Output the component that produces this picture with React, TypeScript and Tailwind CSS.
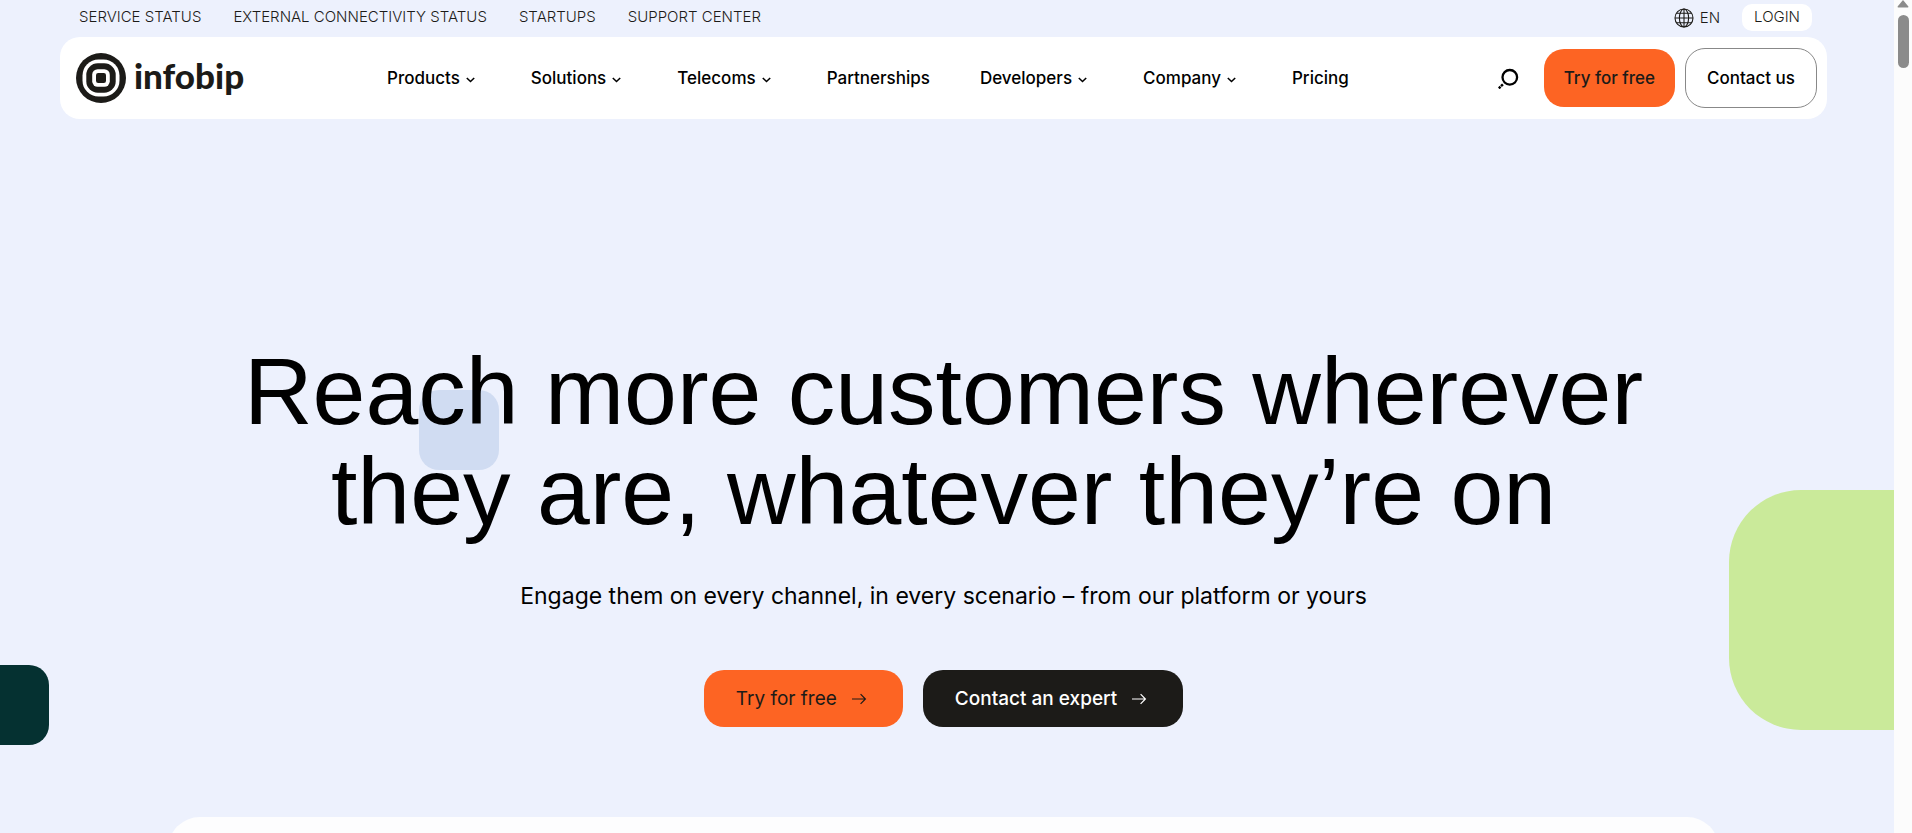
import type { ReactNode } from "react";

const topLinks = ["SERVICE STATUS", "EXTERNAL CONNECTIVITY STATUS", "STARTUPS", "SUPPORT CENTER"];

const navItems = [
  { label: "Products", menu: true },
  { label: "Solutions", menu: true },
  { label: "Telecoms", menu: true },
  { label: "Partnerships", menu: false },
  { label: "Developers", menu: true },
  { label: "Company", menu: true },
  { label: "Pricing", menu: false },
];

function GlobeIcon() {
  return (
    <svg viewBox="0 0 20 20" className="size-5" fill="none" stroke="currentColor" strokeWidth="1.1" aria-hidden="true">
      <circle cx="10" cy="10" r="9" />
      <ellipse cx="10" cy="10" rx="4.6" ry="9" />
      <path d="M10 1v18M1 10h18M2.6 5.2h14.8M2.6 14.8h14.8" />
    </svg>
  );
}

function SearchIcon() {
  return (
    <svg viewBox="0 0 22 22" className="size-[22px]" fill="none" stroke="currentColor" strokeWidth="2.3" aria-hidden="true">
      <circle cx="11.8" cy="10.3" r="7.3" />
      <path d="M4.9 17.4l-1.9 1.8M2.5 19.7l-1.7 1.7" strokeWidth="2.5" />
    </svg>
  );
}

function ChevronIcon() {
  return (
    <svg viewBox="0 0 9 6" className="mt-0.5 mr-1.5 h-[6px] w-[9px]" fill="none" stroke="currentColor" strokeWidth="1.6" aria-hidden="true">
      <path d="M0.8 1l3.7 3.5L8.2 1" />
    </svg>
  );
}

function ArrowIcon() {
  return (
    <svg viewBox="0 0 16 12" className="h-3 w-4" fill="none" stroke="currentColor" strokeWidth="1.2" aria-hidden="true">
      <path d="M1 6h13.4M9.6 1.2L14.4 6l-4.8 4.8" />
    </svg>
  );
}

function Logo() {
  return (
    <a href="#" className="flex items-center gap-2 text-[#1c1b18]" aria-label="infobip">
      <svg viewBox="0 0 50 50" className="size-[50px]" aria-hidden="true">
        <circle cx="25" cy="25" r="25" fill="currentColor" />
        <rect x="6.5" y="6.5" width="37" height="37" rx="16" fill="#fff" />
        <rect x="10.3" y="10.3" width="29.4" height="29.4" rx="11.5" fill="currentColor" />
        <rect x="16.2" y="16.2" width="17.6" height="17.6" rx="5.5" fill="#fff" />
        <rect x="20" y="20" width="10" height="10" rx="2.2" fill="currentColor" />
      </svg>
      <span className="pb-1.5 font-['Lato',sans-serif] text-[35px] leading-10 font-black">infobip</span>
    </a>
  );
}

function HeroButton({ className, children }: { className: string; children: ReactNode }) {
  return (
    <a href="#" className={`flex h-[57px] items-center gap-3.5 rounded-[20px] pt-px pr-9 pl-8 text-[19px] ${className}`}>
      {children}
      <ArrowIcon />
    </a>
  );
}

export default function App() {
  return (
    <div className="flex min-h-screen bg-[#edf1fd] font-['Inter',sans-serif] text-black">
      <div className="relative flex flex-1 flex-col overflow-hidden pr-[7px]">
        <div className="absolute top-[390px] left-[419px] size-20 rounded-[20px] bg-[#d0dcf2]" />
        <div className="absolute top-[490px] -right-[75px] size-60 rounded-[72px] bg-[#caea9a]" />
        <div className="absolute top-[665px] -left-[31px] size-20 rounded-[20px] bg-[#053131]" />

        <header className="relative px-[60px]">
          <div className="flex h-[37px] items-start justify-between pr-[15px] pl-[19px] text-[15px] leading-5 font-light text-[#1c1b18]">
            <nav className="flex gap-8 pt-[7px]" aria-label="Utility">
              {topLinks.map((label) => (
                <a key={label} href="#">{label}</a>
              ))}
            </nav>
            <div className="flex items-center pt-1">
              <button type="button" className="flex items-center gap-1.5">
                <GlobeIcon />
                EN
              </button>
              <a href="#" className="ml-[22px] rounded-[10px] bg-white px-3 pt-[3px] pb-[5px] leading-[19px]">LOGIN</a>
            </div>
          </div>

          <div className="flex h-[82px] items-center justify-between rounded-[20px] bg-white pr-2.5 pl-4">
            <Logo />
            <nav className="mr-1.5 flex items-center gap-[50px] pt-px text-[17px] font-medium" aria-label="Main">
              {navItems.map((item) => (
                <a key={item.label} href="#" className="flex items-center gap-1.5">
                  {item.label}
                  {item.menu && <ChevronIcon />}
                </a>
              ))}
            </nav>
            <div className="flex items-center text-[17px] font-medium">
              <button type="button" aria-label="Search" className="mr-6">
                <SearchIcon />
              </button>
              <a href="#" className="mr-2.5 flex h-[58px] items-center rounded-[20px] bg-[#fd6423] px-5 pt-px text-[#1c1b18]">
                Try for free
              </a>
              <a href="#" className="flex h-[60px] items-center rounded-[20px] border border-[#888] px-[21px] pt-px">
                Contact us
              </a>
            </div>
          </div>
        </header>

        <main className="relative flex flex-1 flex-col">
          <section className="flex flex-col items-center pt-[222px] pb-[90px] text-center">
            <h1 className="font-['Liberation_Sans',sans-serif] text-[95px] leading-[100px]">
              Reach more customers wherever
              <br />
              they are, whatever they’re on
            </h1>
            <p className="mt-[37px] text-[23px] leading-9">
              Engage them on every channel, in every scenario – from our platform or yours
            </p>
            <div className="mt-14 flex gap-5">
              <HeroButton className="bg-[#fd6423] text-[#1c1b18]">Try for free</HeroButton>
              <HeroButton className="bg-[#1c1b18] font-medium text-white">Contact an expert</HeroButton>
            </div>
          </section>
          <section className="h-4 overflow-hidden px-[168px]">
            <div className="h-32 rounded-t-[32px] bg-[#fdfdfe]" />
          </section>
        </main>
      </div>

      <aside className="flex w-[18px] flex-col items-center bg-[#fcfcfc]" aria-hidden="true">
        <svg viewBox="0 0 12 8" className="h-2 w-3">
          <path d="M6 0l5.4 6.4q.4 1-.8 1H1.4q-1.2 0-.8-1z" fill="#8b8b8b" />
        </svg>
        <div className="mt-[7px] h-[53px] w-[11px] rounded-full bg-[#8b8b8b]" />
      </aside>
    </div>
  );
}
